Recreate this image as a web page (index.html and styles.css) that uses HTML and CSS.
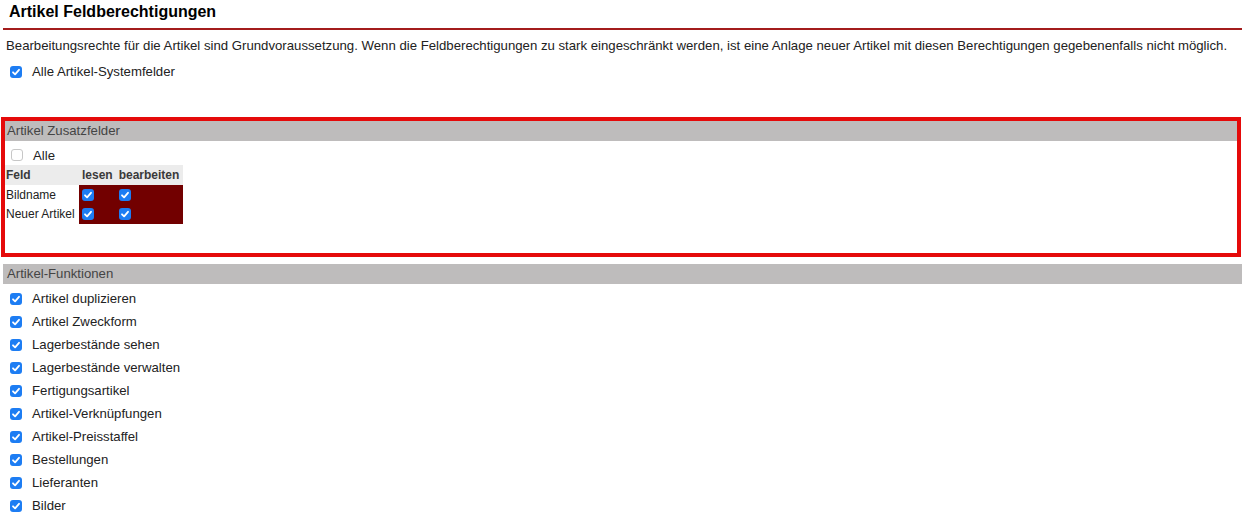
FILE: index.html
```html
<!DOCTYPE html>
<html lang="de">
<head>
<meta charset="utf-8">
<title>Artikel Feldberechtigungen</title>
<link rel="stylesheet" href="styles.css">
</head>
<body>
<div class="page">
  <h1 class="title">Artikel Feldberechtigungen</h1>
  <p class="desc">Bearbeitungsrechte für die Artikel sind Grundvoraussetzung. Wenn die Feldberechtigungen zu stark eingeschränkt werden, ist eine Anlage neuer Artikel mit diesen Berechtigungen gegebenenfalls nicht möglich.</p>
  <div class="check-row top-check">
    <span class="cb on"><svg viewBox="0 0 12 12"><path d="M3 6.3 L5.1 8.4 L9 3.8" /></svg></span>
    <span class="lbl">Alle Artikel-Systemfelder</span>
  </div>

  <section class="box">
    <div class="sec-head">Artikel Zusatzfelder</div>
    <div class="check-row alle-row">
      <span class="cb off"></span>
      <span class="lbl">Alle</span>
    </div>
    <table class="fields">
      <thead>
        <tr><th class="c-feld">Feld</th><th class="c-lesen">lesen</th><th class="c-bearb">bearbeiten</th></tr>
      </thead>
      <tbody>
        <tr>
          <td class="c-feld">Bildname</td>
          <td class="perm"><span class="cb on"><svg viewBox="0 0 12 12"><path d="M3 6.3 L5.1 8.4 L9 3.8" /></svg></span></td>
          <td class="perm"><span class="cb on"><svg viewBox="0 0 12 12"><path d="M3 6.3 L5.1 8.4 L9 3.8" /></svg></span></td>
        </tr>
        <tr>
          <td class="c-feld">Neuer Artikel</td>
          <td class="perm"><span class="cb on"><svg viewBox="0 0 12 12"><path d="M3 6.3 L5.1 8.4 L9 3.8" /></svg></span></td>
          <td class="perm"><span class="cb on"><svg viewBox="0 0 12 12"><path d="M3 6.3 L5.1 8.4 L9 3.8" /></svg></span></td>
        </tr>
      </tbody>
    </table>
  </section>

  <section class="funcs">
    <div class="sec-head">Artikel-Funktionen</div>
    <ul class="list">
      <li class="check-row"><span class="cb on"><svg viewBox="0 0 12 12"><path d="M3 6.3 L5.1 8.4 L9 3.8" /></svg></span><span class="lbl">Artikel duplizieren</span></li>
      <li class="check-row"><span class="cb on"><svg viewBox="0 0 12 12"><path d="M3 6.3 L5.1 8.4 L9 3.8" /></svg></span><span class="lbl">Artikel Zweckform</span></li>
      <li class="check-row"><span class="cb on"><svg viewBox="0 0 12 12"><path d="M3 6.3 L5.1 8.4 L9 3.8" /></svg></span><span class="lbl">Lagerbestände sehen</span></li>
      <li class="check-row"><span class="cb on"><svg viewBox="0 0 12 12"><path d="M3 6.3 L5.1 8.4 L9 3.8" /></svg></span><span class="lbl">Lagerbestände verwalten</span></li>
      <li class="check-row"><span class="cb on"><svg viewBox="0 0 12 12"><path d="M3 6.3 L5.1 8.4 L9 3.8" /></svg></span><span class="lbl">Fertigungsartikel</span></li>
      <li class="check-row"><span class="cb on"><svg viewBox="0 0 12 12"><path d="M3 6.3 L5.1 8.4 L9 3.8" /></svg></span><span class="lbl">Artikel-Verknüpfungen</span></li>
      <li class="check-row"><span class="cb on"><svg viewBox="0 0 12 12"><path d="M3 6.3 L5.1 8.4 L9 3.8" /></svg></span><span class="lbl">Artikel-Preisstaffel</span></li>
      <li class="check-row"><span class="cb on"><svg viewBox="0 0 12 12"><path d="M3 6.3 L5.1 8.4 L9 3.8" /></svg></span><span class="lbl">Bestellungen</span></li>
      <li class="check-row"><span class="cb on"><svg viewBox="0 0 12 12"><path d="M3 6.3 L5.1 8.4 L9 3.8" /></svg></span><span class="lbl">Lieferanten</span></li>
      <li class="check-row"><span class="cb on"><svg viewBox="0 0 12 12"><path d="M3 6.3 L5.1 8.4 L9 3.8" /></svg></span><span class="lbl">Bilder</span></li>
    </ul>
  </section>
</div>
</body>
</html>
```
FILE: styles.css
```css
* { box-sizing: border-box; }
html, body { margin: 0; padding: 0; background: #fff; }
body {
  font-family: "Liberation Sans", Arial, sans-serif;
  font-size: 13.2px;
  color: #222;
  overflow: hidden;
}
.page { width: 1242px; }

.title {
  margin: 0 0 0 3px;
  height: 30px;
  padding: 3px 0 0 6px;
  font-size: 16px;
  font-weight: bold;
  color: #000;
  line-height: 18px;
  border-bottom: 2px solid #a31c1c;
}
.desc {
  margin: 0;
  padding: 8px 0 0 6px;
  height: 24px;
  line-height: 15px;
  color: #222;
  white-space: nowrap;
}

.check-row {
  display: flex;
  align-items: center;
  height: 23px;
  padding-left: 10px;
  white-space: nowrap;
}
.check-row .lbl { margin-left: 10px; color: #222; }
.top-check { margin-top: 6px; }

.cb {
  display: inline-block;
  width: 12px;
  height: 12px;
  border-radius: 3px;
  flex: none;
}
.cb svg { display: block; width: 12px; height: 12px; }
.cb svg path {
  fill: none;
  stroke: #fff;
  stroke-width: 1.8;
  stroke-linecap: round;
  stroke-linejoin: round;
}
.cb.on { background: #1d7df3; }
.cb.off { background: #fff; border: 1px solid #c7c7c7; }

.box {
  margin: 34px 1px 0 1px;
  height: 140px;
  border: 4px solid #e50a0a;
}
.sec-head {
  height: 20px;
  line-height: 20px;
  background: #bebcbc;
  color: #444;
  padding-left: 2px;
}
.alle-row { margin-top: 4px; height: 20px; padding-left: 6px; }
.alle-row .lbl { margin-left: 10px; }

.fields {
  border-collapse: collapse;
  margin-top: 0;
  font-size: 12px;
}
.fields th {
  background: #ececec;
  color: #3a3a3a;
  font-weight: bold;
  text-align: left;
  height: 20px;
  padding: 0 3px 0 1px;
  white-space: nowrap;
}
.fields th.c-lesen, .fields th.c-bearb { padding-left: 3px; }
.fields td {
  height: 19px;
  padding: 0 2px 0 1px;
  vertical-align: middle;
  color: #222;
  white-space: nowrap;
}
.fields tbody tr:last-child td { height: 20px; }
.fields td.perm {
  background: #720000;
  padding-left: 3px;
}
.fields td.perm .cb { vertical-align: middle; margin-top: -1px; }
.fields .c-feld { width: 74px; }
.fields .c-lesen { width: 36px; }
.fields .c-bearb { width: 67px; }

.funcs { margin: 7px 0 0 3px; }
.funcs .sec-head { padding-left: 4px; }
.list {
  list-style: none;
  margin: 3px 0 0 0;
  padding: 0;
}
.list .check-row { padding-left: 7px; }
```
